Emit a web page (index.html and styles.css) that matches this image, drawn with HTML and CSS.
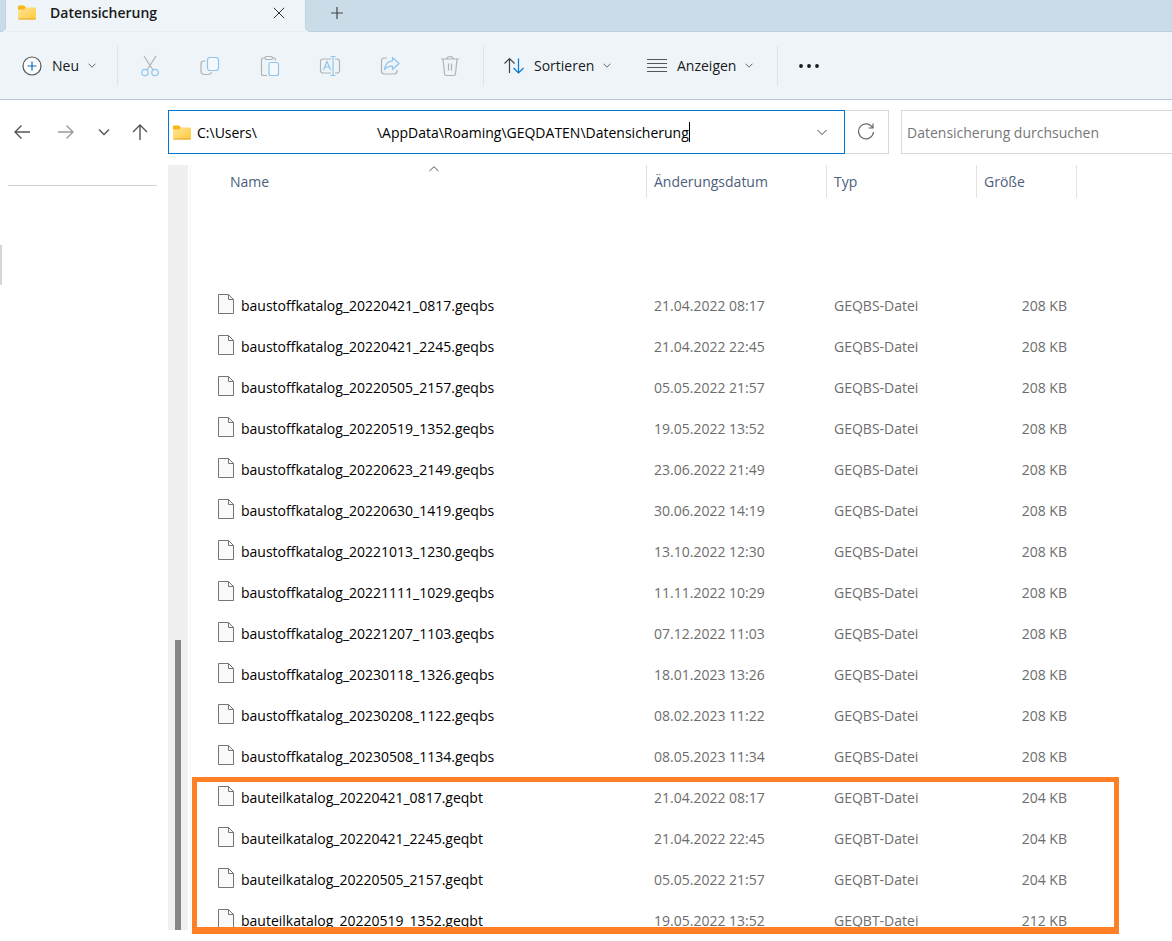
FILE: index.html
```html
<!DOCTYPE html>
<html lang="de">
<head>
  <meta charset="UTF-8">
  <title>Datensicherung</title>
  <link rel="stylesheet" href="styles.css">
</head>
<body>

<svg class="defs" width="0" height="0" aria-hidden="true">
  <defs>
    <linearGradient id="folderFill" x1="0" y1="0" x2="1" y2="1">
      <stop offset="0" stop-color="#ffe69a"/>
      <stop offset="1" stop-color="#ffc83a"/>
    </linearGradient>
  </defs>
  <symbol id="folder" viewBox="0 0 18 15">
    <path d="M0 1.5Q0 0.5 1 0.5H6L8 2.5V5H0Z" fill="#fab515"/>
    <path d="M0 4.5H6L8 2.5H17Q18 2.5 18 3.5V13.5Q18 14.5 17 14.5H1Q0 14.5 0 13.5Z" fill="url(#folderFill)"/>
    <path d="M0.5 14H17.5" stroke="#e9a62a" fill="none"/>
  </symbol>
  <symbol id="chevron" viewBox="0 0 8 5">
    <path d="M0.5 0.7L4 4.2L7.5 0.7" fill="none" stroke="currentColor"/>
  </symbol>
  <symbol id="file" viewBox="0 0 16 20">
    <path d="M0.5 0.5H10.5L15.5 5.5V19.5H0.5Z" fill="#fafafa" stroke="#777573"/>
    <path d="M10.5 0.5V5.5H15.5" fill="none" stroke="#777573"/>
  </symbol>
</svg>

<header class="tabs">
  <div class="strip start"></div>
  <div class="tab">
    <svg class="folder"><use href="#folder"/></svg>
    <span class="tab-title">Datensicherung</span>
    <button class="plain" aria-label="Tab schließen">
      <svg width="12" height="12" viewBox="0 0 12 12"><path d="M0.8 0.8L11.2 11.2M11.2 0.8L0.8 11.2" stroke="#333"/></svg>
    </button>
  </div>
  <div class="strip rest">
    <button class="plain new-tab" aria-label="Neuer Tab">
      <svg width="12" height="12" viewBox="0 0 12 12"><path d="M6 0V12M0 6H12" stroke="#444" stroke-width="1.2"/></svg>
    </button>
  </div>
</header>

<div class="toolbar">
  <button class="plain tool new">
    <svg width="20" height="20" viewBox="0 0 20 20" fill="none"><circle cx="10" cy="10" r="9" fill="#fafcfd" stroke="#555" stroke-width="1.2"/><path d="M10 5.5V14.5M5.5 10H14.5" stroke="#0f6cbd" stroke-width="1.2"/></svg>
    <span>Neu</span>
    <svg class="chevron"><use href="#chevron"/></svg>
  </button>
  <div class="icons">
    <button class="plain" aria-label="Ausschneiden">
      <svg width="20" height="22" viewBox="0 0 20 22" fill="none" stroke-width="1.2"><path d="M4 1L13 15M16 1L7 15" stroke="#b0b3b5"/><circle cx="5" cy="17.5" r="3.2" stroke="#8fc5ee"/><circle cx="15" cy="17.5" r="3.2" stroke="#8fc5ee"/></svg>
    </button>
    <button class="plain" aria-label="Kopieren">
      <svg width="20" height="20" viewBox="0 0 20 20" fill="none" stroke-width="1.2"><path d="M5.5 5H4Q1 5 1 8V15Q1 18.5 4.5 18.5H8Q11 18.5 11.5 16" stroke="#b0b3b5"/><rect x="7.5" y="1.5" width="11" height="13" rx="2.5" stroke="#8fc5ee" fill="#f5f9fc"/></svg>
    </button>
    <button class="plain" aria-label="Einfügen">
      <svg width="20" height="22" viewBox="0 0 20 22" fill="none" stroke-width="1.2"><path d="M5 3H3.5Q1.5 3 1.5 5V18.5Q1.5 20.5 3.5 20.5H7M12.5 3H14Q15.5 3 15.5 5.5" stroke="#b0b3b5"/><rect x="5" y="1.5" width="7.5" height="3" rx="1.5" stroke="#b0b3b5"/><rect x="9" y="7.5" width="9.5" height="13" rx="2" stroke="#8fc5ee" fill="#f5f9fc"/></svg>
    </button>
    <button class="plain" aria-label="Umbenennen">
      <svg width="22" height="22" viewBox="0 0 22 22" fill="none" stroke-width="1.2"><path d="M12 4H4Q1.5 4 1.5 6.5V15.5Q1.5 18 4 18H12M16 4H18Q20.5 4 20.5 6.5V15.5Q20.5 18 18 18H16" stroke="#b0b3b5"/><path d="M14 1.5V20.5M11.5 1.5H16.5M11.5 20.5H16.5M4.5 15L8 6.5L11.5 15M5.7 12H10.3" stroke="#8fc5ee"/></svg>
    </button>
    <button class="plain" aria-label="Freigeben">
      <svg width="20" height="20" viewBox="0 0 20 20" fill="none" stroke-width="1.2" stroke-linejoin="round"><path d="M7 2H4.5Q1.5 2 1.5 5V15Q1.5 18 4.5 18H14Q17 18 17 15V14" stroke="#b0b3b5"/><path d="M12.5 1.5L19 7.5L12.5 13.5V10.2Q7.5 10 4.5 13.5Q5.5 5.5 12.5 4.8Z" stroke="#8fc5ee"/></svg>
    </button>
    <button class="plain" aria-label="Löschen">
      <svg width="20" height="22" viewBox="0 0 20 22" fill="none" stroke="#b0b3b5" stroke-width="1.2"><path d="M1 4H19M7 4Q7 1.5 10 1.5T13 4M3 4L4.5 18.5Q4.7 20.5 6.5 20.5H13.5Q15.3 20.5 15.5 18.5L17 4M8.5 8.5V15.5M11.5 8.5V15.5"/></svg>
    </button>
  </div>
  <button class="plain tool sort">
    <svg width="20" height="18" viewBox="0 0 20 18" fill="none" stroke-width="1.2"><path d="M5.5 16V1.5M0.5 6.5L5.5 1.5L10.5 6.5" stroke="#444"/><path d="M14.5 1.5V16M9.5 11L14.5 16L19.5 11" stroke="#0078d4"/></svg>
    <span>Sortieren</span>
    <svg class="chevron"><use href="#chevron"/></svg>
  </button>
  <button class="plain tool view">
    <svg width="20" height="15" viewBox="0 0 20 15"><path d="M0 1.5H20M0 5.5H20M0 9.5H20M0 13.5H20" stroke="#555"/></svg>
    <span>Anzeigen</span>
    <svg class="chevron"><use href="#chevron"/></svg>
  </button>
  <button class="plain tool more" aria-label="Mehr anzeigen">
    <svg width="22" height="4" viewBox="0 0 22 4" fill="#1a1a1a"><circle cx="3" cy="2" r="1.9"/><circle cx="11" cy="2" r="1.9"/><circle cx="19" cy="2" r="1.9"/></svg>
  </button>
</div>

<div class="navbar">
  <nav class="arrows">
    <button class="plain back" aria-label="Zurück">
      <svg width="16" height="16" viewBox="0 0 16 16" fill="none" stroke="#555" stroke-width="1.4"><path d="M16 8H1M7.5 1.5L1 8L7.5 14.5"/></svg>
    </button>
    <button class="plain forward" aria-label="Vorwärts">
      <svg width="16" height="16" viewBox="0 0 16 16" fill="none" stroke="#999" stroke-width="1.4"><path d="M0 8H15M8.5 1.5L15 8L8.5 14.5"/></svg>
    </button>
    <button class="plain recent" aria-label="Zuletzt besucht">
      <svg width="12" height="8" viewBox="0 0 12 8" fill="none" stroke="#555" stroke-width="1.4"><path d="M1 1.5L6 6.5L11 1.5"/></svg>
    </button>
    <button class="plain up" aria-label="Nach oben">
      <svg width="16" height="16" viewBox="0 0 16 16" fill="none" stroke="#555" stroke-width="1.4"><path d="M8 16V1M1 8L8 1L15 8"/></svg>
    </button>
  </nav>
  <div class="address">
    <svg class="folder"><use href="#folder"/></svg>
    <input class="path" type="text" aria-label="Adresse" value="C:\Users\                                 \AppData\Roaming\GEQDATEN\Datensicherung">
    <span class="caret"></span>
    <button class="plain open" aria-label="Vorherige Orte">
      <svg width="10" height="7" viewBox="0 0 10 7" fill="none" stroke="#444"><path d="M0.5 1L5 5.5L9.5 1"/></svg>
    </button>
  </div>
  <button class="plain refresh" aria-label="Aktualisieren">
    <svg width="18" height="18" viewBox="0 0 18 18" fill="none" stroke="#666" stroke-width="1.2"><path d="M15.5 4.5A7.5 7.5 0 1 0 16.5 9M16 0.5V5H11.5"/></svg>
  </button>
  <input class="search" type="search" aria-label="Suchen" placeholder="Datensicherung durchsuchen">
</div>

<div class="content">
  <aside class="sidebar">
    <hr>
    <div class="selected"></div>
  </aside>
  <div class="scroll"><div class="thumb"></div></div>
  <main class="pane">
    <table>
      <colgroup>
        <col class="c-name"><col class="c-date"><col class="c-type"><col class="c-size">
      </colgroup>
      <thead>
        <tr>
          <th><div class="head name">Name
            <svg class="asc" width="10" height="6" viewBox="0 0 10 6" fill="none" stroke="#555"><path d="M0.5 5L5 0.7L9.5 5"/></svg>
          </div></th>
          <th><div class="head">Änderungsdatum</div></th>
          <th><div class="head">Typ</div></th>
          <th><div class="head last">Größe</div></th>
        </tr>
      </thead>
      <tbody id="files"></tbody>
    </table>
    <div class="mark"></div>
  </main>
</div>

<script>
  const files = [
    ['baustoffkatalog_20220421_0817.geqbs', '21.04.2022 08:17', '208 KB'],
    ['baustoffkatalog_20220421_2245.geqbs', '21.04.2022 22:45', '208 KB'],
    ['baustoffkatalog_20220505_2157.geqbs', '05.05.2022 21:57', '208 KB'],
    ['baustoffkatalog_20220519_1352.geqbs', '19.05.2022 13:52', '208 KB'],
    ['baustoffkatalog_20220623_2149.geqbs', '23.06.2022 21:49', '208 KB'],
    ['baustoffkatalog_20220630_1419.geqbs', '30.06.2022 14:19', '208 KB'],
    ['baustoffkatalog_20221013_1230.geqbs', '13.10.2022 12:30', '208 KB'],
    ['baustoffkatalog_20221111_1029.geqbs', '11.11.2022 10:29', '208 KB'],
    ['baustoffkatalog_20221207_1103.geqbs', '07.12.2022 11:03', '208 KB'],
    ['baustoffkatalog_20230118_1326.geqbs', '18.01.2023 13:26', '208 KB'],
    ['baustoffkatalog_20230208_1122.geqbs', '08.02.2023 11:22', '208 KB'],
    ['baustoffkatalog_20230508_1134.geqbs', '08.05.2023 11:34', '208 KB'],
    ['bauteilkatalog_20220421_0817.geqbt', '21.04.2022 08:17', '204 KB'],
    ['bauteilkatalog_20220421_2245.geqbt', '21.04.2022 22:45', '204 KB'],
    ['bauteilkatalog_20220505_2157.geqbt', '05.05.2022 21:57', '204 KB'],
    ['bauteilkatalog_20220519_1352.geqbt', '19.05.2022 13:52', '212 KB']
  ];

  const filesEl = document.getElementById('files');

  files.forEach(([name, date, size]) => {
    const type = name.split('.')[1].toUpperCase() + '-Datei';
    const row = document.createElement('tr');
    row.innerHTML = `
      <td><div class="file"><svg width="16" height="20"><use href="#file"/></svg><span>${name}</span></div></td>
      <td>${date}</td>
      <td>${type}</td>
      <td class="size">${size}</td>`;
    filesEl.appendChild(row);
  });
</script>

</body>
</html>
```
FILE: styles.css
```css
* {
  box-sizing: border-box;
}

body {
  margin: 0;
  height: 100vh;
  display: flex;
  flex-direction: column;
  overflow: hidden;
  background: white;
  color: #1a1a1a;
  font-family: "Open Sans", "Noto Sans", sans-serif;
  font-size: 14px;
  line-height: 20px;
}

svg {
  display: block;
  flex: none;
}

.defs {
  position: absolute;
}

.plain {
  display: flex;
  align-items: center;
  justify-content: center;
  padding: 0;
  border: none;
  background: none;
  color: inherit;
  font: inherit;
}

.folder {
  width: 18px;
  height: 15px;
}

.chevron {
  width: 8px;
  height: 5px;
  color: #666;
}

/* tabs */
.tabs {
  display: flex;
  flex: none;
  height: 32px;
  background: #eff4f9;
}

.strip {
  background: #cbdce9;
  border-bottom: 1px solid #bccfdd;
}

.start {
  width: 6px;
  border-right: 1px solid #c0d2e0;
  border-bottom-right-radius: 5px;
}

.rest {
  flex: 1;
  border-left: 1px solid #c0d2e0;
  border-bottom-left-radius: 5px;
}

.tab {
  display: flex;
  align-items: center;
  width: 299px;
  padding: 0 20px 6px 12px;
  border-bottom: 1px solid #e6edf3;
}

.tab-title {
  flex: 1;
  margin-left: 14px;
  font-weight: 600;
}

.new-tab {
  width: 62px;
  height: 26px;
}

/* toolbar */
.toolbar {
  display: flex;
  flex: none;
  align-items: center;
  height: 68px;
  background: #eff4f9;
  border-bottom: 1px solid #b8c8d6;
}

.tool {
  height: 40px;
  gap: 10px;
  justify-content: flex-start;
}

.tool span {
  padding-top: 1px;
}

.tool .chevron {
  margin-left: -1px;
}

.new {
  width: 118px;
  padding-left: 22px;
  border-right: 1px solid #dde3e8;
}

.icons {
  display: flex;
  padding: 0 3px 0 2px;
}

.icons button {
  width: 60px;
  height: 40px;
}

.sort {
  width: 143px;
  padding-left: 20px;
  border-left: 1px solid #dde3e8;
}

.view {
  width: 152px;
  padding-left: 21px;
  border-right: 1px solid #dde3e8;
}

.more {
  padding-left: 20px;
}

/* address row */
.navbar {
  display: flex;
  flex: none;
  height: 44px;
  margin-top: 10px;
}

.arrows {
  display: flex;
  width: 168px;
}

.back,
.forward {
  width: 44px;
}

.recent {
  width: 32px;
}

.up {
  width: 40px;
}

.address {
  display: flex;
  flex: 1;
  align-items: center;
  padding-left: 4px;
  border: 1px solid #0078d4;
}

.path {
  field-sizing: content;
  min-width: 0;
  margin-left: 6px;
  padding: 1px 0 0;
  border: none;
  outline: none;
  background: none;
  color: black;
  font: inherit;
}

.caret {
  width: 1px;
  height: 20px;
  background: black;
}

.open {
  width: 44px;
  height: 42px;
  margin-left: auto;
}

.refresh {
  width: 44px;
  padding-right: 2px;
  border: 1px solid #d9d9d9;
  border-left: none;
}

.search {
  width: 271px;
  margin-left: 12px;
  padding: 1px 5px 0;
  border: 1px solid #d9d9d9;
  border-right: none;
  border-radius: 0;
  outline: none;
  font: inherit;
}

.search::placeholder {
  color: #767676;
}

/* content */
.content {
  display: flex;
  flex: 1;
  min-height: 0;
  padding: 11px 0 7px;
}

.sidebar {
  width: 168px;
}

.sidebar hr {
  height: 1px;
  margin: 20px 11px 59px 8px;
  border: none;
  background: #d2d2d2;
}

.selected {
  width: 2px;
  height: 40px;
  background: #d6d6d6;
}

.scroll {
  display: flex;
  width: 20px;
  margin-bottom: 4px;
  padding: 475px 7px 0;
  background: #f0f0f0;
}

.thumb {
  width: 6px;
  background: #868686;
}

.pane {
  position: relative;
  flex: 1;
  min-width: 0;
  margin-left: 2px;
  overflow: hidden;
  border-left: 1px solid #f5f5f5;
}

table {
  width: 886px;
  table-layout: fixed;
  border-collapse: collapse;
}

.c-name {
  width: 455px;
}

.c-date {
  width: 180px;
}

.c-type {
  width: 150px;
}

.c-size {
  width: 101px;
}

th {
  height: 120px;
  padding: 0;
  color: #4c607a;
  font-weight: normal;
  text-align: left;
  vertical-align: top;
}

.head {
  height: 33px;
  padding: 7px 7px 6px;
  border-left: 1px solid #e2e2e2;
}

.head.name {
  position: relative;
  padding-left: 39px;
  border-left: none;
}

.head.last {
  border-right: 1px solid #e2e2e2;
}

/* sort direction, sits over the header cell */
.asc {
  position: absolute;
  top: 1px;
  left: 238px;
}

td {
  height: 41px;
  padding: 0 8px;
  color: #6d6d6d;
}

td:first-child {
  padding-left: 27px;
}

.file {
  display: flex;
  align-items: center;
  gap: 7px;
  color: black;
}

.file svg {
  margin-bottom: 4px;
}

td.size {
  padding-right: 10px;
  text-align: right;
}

/* frame around the geqbt files */
.mark {
  position: absolute;
  top: 612px;
  bottom: 0;
  left: 1px;
  width: 927px;
  border: 5px solid #ff7f27;
  border-bottom-width: 7px;
}
```
